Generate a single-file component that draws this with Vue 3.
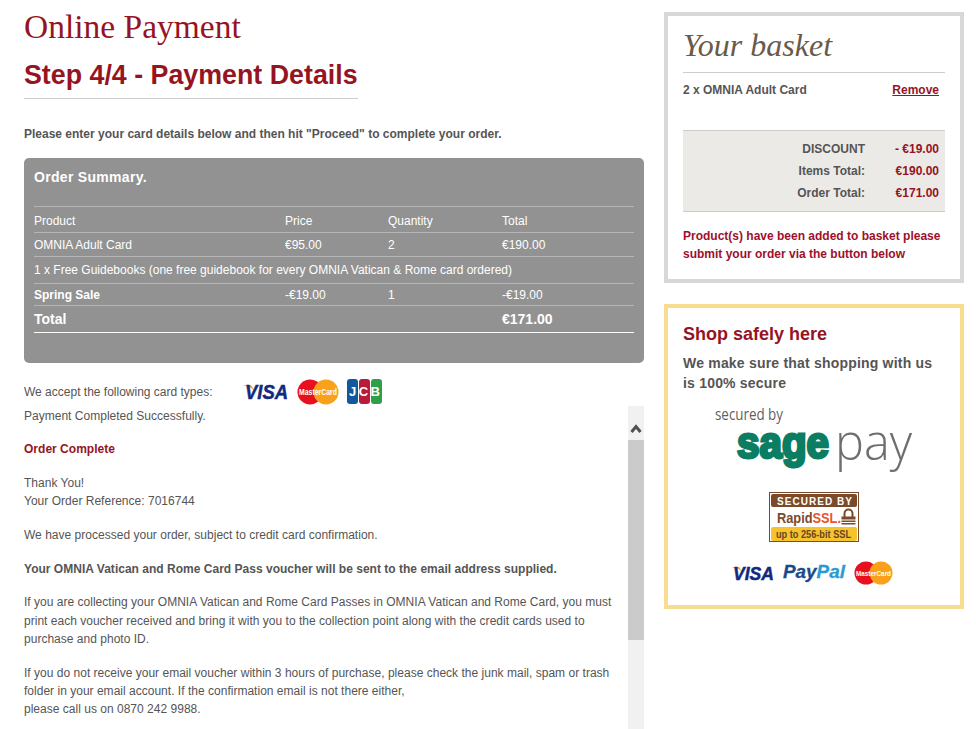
<script setup>
const rows = [
  { product: 'OMNIA Adult Card', price: '€95.00', qty: '2', total: '€190.00' },
]

const basketTotals = [
  { label: 'DISCOUNT', value: '- €19.00' },
  { label: 'Items Total:', value: '€190.00' },
  { label: 'Order Total:', value: '€171.00' },
]
</script>

<template>
  <div class="page">
    <main class="main">
      <h1 class="title">Online Payment</h1>
      <h2 class="step">Step 4/4 - Payment Details</h2>
      <p class="intro">Please enter your card details below and then hit "Proceed" to complete your order.</p>

      <section class="summary">
        <h3 class="summary__title">Order Summary.</h3>
        <table class="summary__table">
          <colgroup>
            <col class="c1" />
            <col class="c2" />
            <col class="c3" />
            <col class="c4" />
          </colgroup>
          <tbody>
            <tr class="r-head">
              <td>Product</td>
              <td>Price</td>
              <td>Quantity</td>
              <td>Total</td>
            </tr>
            <tr v-for="row in rows" :key="row.product" class="r-item">
              <td>{{ row.product }}</td>
              <td>{{ row.price }}</td>
              <td>{{ row.qty }}</td>
              <td>{{ row.total }}</td>
            </tr>
            <tr class="r-free">
              <td colspan="4">1 x Free Guidebooks (one free guidebook for every OMNIA Vatican &amp; Rome card ordered)</td>
            </tr>
            <tr class="r-sale">
              <td><b>Spring Sale</b></td>
              <td>-€19.00</td>
              <td>1</td>
              <td>-€19.00</td>
            </tr>
            <tr class="r-total">
              <td colspan="3">Total</td>
              <td>€171.00</td>
            </tr>
          </tbody>
        </table>
      </section>

      <div class="accept">
        <span class="accept__label">We accept the following card types:</span>
        <div class="accept__cards">
          <svg class="logo" width="46" height="18" viewBox="0 0 46 18" aria-label="Visa">
            <path d="M0 2 L8 2 L11 7 Q7 3.500 0 2Z" fill="#f2a81d" />
            <text x="2" y="16" font-family="Liberation Sans" font-size="20" font-weight="700" font-style="italic" fill="#12297f" stroke="#12297f" stroke-width="0.500" textLength="43" lengthAdjust="spacingAndGlyphs">VISA</text>
          </svg>
          <svg class="logo" width="42" height="26" viewBox="0 0 42 26" aria-label="MasterCard">
            <circle cx="13" cy="13" r="12.500" fill="#e8101f" />
            <circle cx="29" cy="13" r="12.500" fill="#f9a11b" />
            <text x="21" y="16" text-anchor="middle" font-family="Liberation Sans" font-size="9" font-weight="700" fill="#fff" textLength="38" lengthAdjust="spacingAndGlyphs">MasterCard</text>
          </svg>
          <svg class="logo" width="35" height="25" viewBox="0 0 35 25" aria-label="JCB">
            <rect x="0" y="0" width="11" height="25" rx="3" fill="#10599d" />
            <rect x="12" y="0" width="11" height="25" rx="3" fill="#b71c38" />
            <rect x="24" y="0" width="11" height="25" rx="3" fill="#2f9e48" />
            <text x="17.500" y="17" text-anchor="middle" font-family="Liberation Sans" font-size="13" font-weight="700" fill="#fff" textLength="31" lengthAdjust="spacing">JCB</text>
          </svg>
        </div>
      </div>

      <div class="result">
        <div class="result__body">
          <p>Payment Completed Successfully.</p>
          <p class="result__heading">Order Complete</p>
          <p>Thank You!<br />Your Order Reference: 7016744</p>
          <p>We have processed your order, subject to credit card confirmation.</p>
          <p><b>Your OMNIA Vatican and Rome Card Pass voucher will be sent to the email address supplied.</b></p>
          <p>If you are collecting your OMNIA Vatican and Rome Card Passes in OMNIA Vatican and Rome Card, you must print each voucher received and bring it with you to the collection point along with the credit cards used to purchase and photo ID.</p>
          <p>If you do not receive your email voucher within 3 hours of purchase, please check the junk mail, spam or trash folder in your email account. If the confirmation email is not there either,<br />please call us on 0870 242 9988.</p>
        </div>
        <div class="scrollbar" aria-hidden="true">
          <div class="scrollbar__btn">
            <svg width="12" height="9" viewBox="0 0 12 9">
              <path d="M1.500 8 L6 2.500 L10.500 8" fill="none" stroke="#505050" stroke-width="3" />
            </svg>
          </div>
          <div class="scrollbar__thumb"></div>
        </div>
      </div>
    </main>

    <aside class="side">
      <section class="basket">
        <h2 class="basket__title">Your basket</h2>
        <div class="basket__item">
          <b>2 x OMNIA Adult Card</b>
          <a class="basket__remove" href="#">Remove</a>
        </div>
        <div class="basket__totals">
          <div v-for="line in basketTotals" :key="line.label" class="basket__line">
            <span class="basket__label">{{ line.label }}</span>
            <span class="basket__value">{{ line.value }}</span>
          </div>
        </div>
        <p class="basket__msg">Product(s) have been added to basket please submit your order via the button below</p>
      </section>

      <section class="safe">
        <h3 class="safe__title">Shop safely here</h3>
        <p class="safe__text">We make sure that shopping with us is 100% secure</p>

        <svg class="safe__sage logo" width="200" height="74" viewBox="0 0 200 74" aria-label="Secured by Sage Pay">
          <text x="0" y="15" font-family="Open Sans" font-size="16" fill="#5f5f5f" textLength="68" lengthAdjust="spacingAndGlyphs">secured by</text>
          <text x="22" y="53" font-family="Liberation Sans" font-size="44" font-weight="700" fill="#0a7d63" stroke="#0a7d63" stroke-width="3" textLength="92" lengthAdjust="spacingAndGlyphs">sage</text>
          <text x="120" y="55" font-family="Open Sans" font-size="50" font-weight="300" fill="#6d6e70" textLength="77" lengthAdjust="spacingAndGlyphs">pay</text>
        </svg>

        <svg class="safe__ssl logo" width="90" height="50" viewBox="0 0 90 50" aria-label="Secured by RapidSSL">
          <rect x="0.500" y="0.500" width="89" height="49" fill="#fff" stroke="#7b4a2a" />
          <rect x="2" y="2" width="86" height="13" rx="2" fill="#7b4a2a" />
          <text x="8" y="12.500" font-family="Liberation Sans" font-size="10" font-weight="700" fill="#fff" textLength="75" lengthAdjust="spacing">SECURED BY</text>
          <text x="8" y="31" font-family="Liberation Sans" font-size="15" font-weight="700" fill="#7b4a2a" textLength="64" lengthAdjust="spacingAndGlyphs">Rapid<tspan fill="#e8552a">SSL.</tspan></text>
          <path d="M75.500 25 v-3.500 a4 4 0 0 1 8 0 V25" fill="none" stroke="#7b4a2a" stroke-width="2" />
          <rect x="72.500" y="24.500" width="14" height="3" fill="#7b4a2a" />
          <rect x="72.500" y="28.500" width="14" height="1.500" fill="#7b4a2a" />
          <rect x="72.500" y="31" width="14" height="1.500" fill="#7b4a2a" />
          <rect x="2" y="35" width="86" height="14" rx="2" fill="#f5c32c" />
          <text x="7" y="45.500" font-family="Liberation Sans" font-size="10.500" font-weight="700" fill="#6b4423" textLength="75" lengthAdjust="spacingAndGlyphs">up to 256-bit SSL</text>
        </svg>

        <div class="safe__cards">
          <svg class="logo" width="48" height="18" viewBox="0 0 48 18" aria-label="Visa">
            <path d="M2 3 L10 3 L13 7 Q9 4 2 3Z" fill="#f2a81d" />
            <text x="4" y="15.500" font-family="Liberation Sans" font-size="19" font-weight="700" font-style="italic" fill="#12297f" stroke="#12297f" stroke-width="0.500" textLength="41" lengthAdjust="spacingAndGlyphs">VISA</text>
          </svg>
          <svg class="logo" width="65" height="20" viewBox="0 0 65 20" aria-label="PayPal">
            <text x="0" y="15" font-family="Liberation Sans" font-size="18" font-weight="700" font-style="italic" fill="#1a4a8c" stroke="#1a4a8c" stroke-width="0.300" textLength="62" lengthAdjust="spacingAndGlyphs">Pay<tspan fill="#2a9ad6" stroke="#2a9ad6">Pal</tspan></text>
          </svg>
          <svg class="logo" width="39" height="24" viewBox="0 0 39 24" aria-label="MasterCard">
            <circle cx="12" cy="12" r="11.500" fill="#e8101f" />
            <circle cx="27" cy="12" r="11.500" fill="#f9a11b" />
            <text x="19.500" y="15" text-anchor="middle" font-family="Liberation Sans" font-size="8" font-weight="700" fill="#fff" textLength="35" lengthAdjust="spacingAndGlyphs">MasterCard</text>
          </svg>
        </div>
      </section>
    </aside>
  </div>
</template>

<style>
html,
body {
  background: #fff;
  overflow: hidden;
}
</style>

<style scoped>
.page {
  display: flex;
  gap: 20px;
  width: 976px;
  height: 729px;
  padding-left: 24px;
  box-sizing: border-box;
  overflow: hidden;
  font-family: 'Liberation Sans', Arial, sans-serif;
  font-size: 12px;
  color: #555;
}

.logo {
  overflow: visible;
}

.main {
  width: 620px;
  flex: none;
}

.title {
  margin: 8px 0 0;
  font-family: 'Liberation Serif', 'Times New Roman', serif;
  font-size: 33.500px;
  line-height: 38px;
  font-weight: 400;
  color: #961422;
}

.step {
  display: inline-block;
  margin: 12px 0 0;
  padding-bottom: 5px;
  font-size: 26.800px;
  line-height: 35px;
  font-weight: 700;
  color: #961422;
  border-bottom: 1px solid #ccc;
}

.intro {
  margin: 26px 0 0;
  font-weight: 700;
  line-height: 18px;
}

.summary {
  margin-top: 15px;
  height: 205px;
  box-sizing: border-box;
  padding: 0 10px;
  background: #929292;
  border-radius: 5px;
  color: #fff;
}

.summary__title {
  margin: 0;
  padding-top: 11px;
  height: 48px;
  box-sizing: border-box;
  font-size: 14px;
  line-height: 16px;
  font-weight: 700;
  letter-spacing: 0.300px;
}

.summary__table {
  width: 100%;
  border-collapse: collapse;
  table-layout: fixed;
  border-top: 1px solid #b5b5b5;
}

.c1 { width: 251px; }
.c2 { width: 103px; }
.c3 { width: 114px; }

.summary__table td {
  padding: 0;
  border-bottom: 1px solid #b5b5b5;
}

.summary__table .r-head td {
  height: 26px;
  padding-top: 2px;
  box-sizing: border-box;
}

.r-item td { height: 23px; }
.r-free td { height: 26px; }
.r-sale td { height: 21px; }

.summary__table .r-total td {
  height: 26px;
  font-size: 14px;
  font-weight: 700;
  border-bottom-color: #fff;
}

.accept {
  display: flex;
  align-items: center;
  height: 25px;
  margin-top: 16px;
}

.accept__label {
  width: 219px;
  flex: none;
}

.accept__cards {
  display: flex;
  align-items: center;
  gap: 8px;
}

.result {
  position: relative;
  height: 323px;
  margin-top: 2px;
  overflow: hidden;
}

.result__body {
  width: 592px;
  padding-top: 0.800px;
  line-height: 18.400px;
  letter-spacing: 0.015px;
}

.result__body p {
  margin: 0 0 15.200px;
}

.result__heading {
  font-weight: 700;
  color: #961422;
}

.scrollbar {
  position: absolute;
  top: 0;
  right: 0;
  bottom: 0;
  width: 16px;
  background: #f1f1f1;
}

.scrollbar__btn {
  display: flex;
  align-items: flex-end;
  justify-content: center;
  height: 34px;
  box-sizing: border-box;
  padding-bottom: 7px;
}

.scrollbar__thumb {
  height: 200px;
  background: #cbcbcb;
}

.side {
  width: 300px;
  flex: none;
  padding-top: 12px;
}

.basket {
  height: 271px;
  box-sizing: border-box;
  border: 4px solid #d8d8d8;
  padding: 0 15px;
}

.basket__title {
  margin: 0;
  height: 57px;
  box-sizing: border-box;
  padding-top: 10px;
  font-family: 'Liberation Serif', Georgia, serif;
  font-size: 32px;
  line-height: 38px;
  font-style: italic;
  font-weight: 400;
  color: #6a5a4a;
  border-bottom: 1px solid #ccc;
}

.basket__item {
  display: flex;
  justify-content: space-between;
  height: 57px;
  padding: 8px 6px 0 0;
  box-sizing: border-box;
  line-height: 18px;
}

.basket__remove {
  color: #961422;
  font-weight: 700;
}

.basket__totals {
  height: 82px;
  box-sizing: border-box;
  padding-top: 7px;
  background: #eceae7;
  border-top: 1px solid #ccc;
  border-bottom: 1px solid #ccc;
}

.basket__line {
  display: flex;
  justify-content: flex-end;
  height: 22px;
  line-height: 22px;
  font-weight: 700;
  padding-right: 6px;
}

.basket__label {
  text-align: right;
}

.basket__value {
  width: 74px;
  text-align: right;
  color: #961422;
}

.basket__msg {
  margin: 15px 0 0;
  line-height: 18px;
  font-weight: 700;
  color: #a00f2b;
}

.safe {
  height: 305px;
  margin-top: 21px;
  box-sizing: border-box;
  border: 4px solid #f8dc8f;
  padding: 0 15px;
}

.safe__title {
  margin: 0;
  padding-top: 15px;
  font-size: 18px;
  line-height: 22px;
  font-weight: 700;
  color: #961422;
}

.safe__text {
  width: 255px;
  margin: 8px 0 0;
  font-size: 14px;
  line-height: 20px;
  font-weight: 700;
  letter-spacing: 0.200px;
}

.safe__sage {
  display: block;
  margin: 12px 0 0 32px;
}

.safe__ssl {
  display: block;
  margin: 13px 0 0 86px;
}

.safe__cards {
  display: flex;
  align-items: center;
  gap: 6px;
  margin: 19px 0 0 46px;
}
</style>
